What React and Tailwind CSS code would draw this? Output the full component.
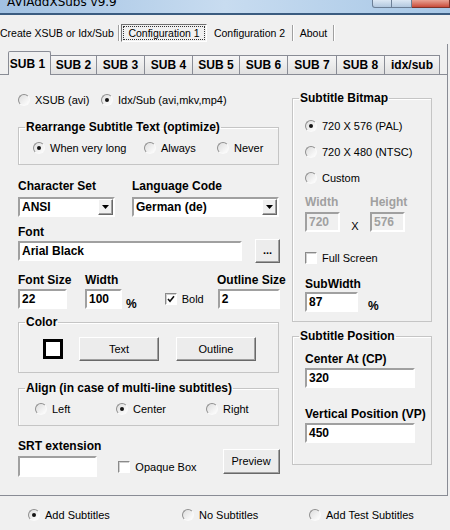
import React from 'react';

const subTabs = [
  { label: 'SUB 1', w: 'w-[43px]', active: true },
  { label: 'SUB 2', w: 'w-[46px]' },
  { label: 'SUB 3', w: 'w-[48px]' },
  { label: 'SUB 4', w: 'w-[48px]' },
  { label: 'SUB 5', w: 'w-[47px]' },
  { label: 'SUB 6', w: 'w-[48px]' },
  { label: 'SUB 7', w: 'w-[49px]' },
  { label: 'SUB 8', w: 'w-[48px]' },
  { label: 'idx/sub', w: 'w-[55px]' },
];

function Radio({ checked }) {
  return (
    <span className="w-[12px] h-[12px] shrink-0 rounded-full border border-t-[#8f8f8f] border-l-[#8f8f8f] border-b-[#fafafa] border-r-[#fafafa] bg-gradient-to-br from-[#dedede] to-white flex items-center justify-center">
      {checked && <span className="w-[4px] h-[4px] rounded-full bg-[#141414]" />}
    </span>
  );
}

function Opt({ checked, label, className = '' }) {
  return (
    <div className={`flex items-center gap-[5px] h-[14px] shrink-0 ${className}`}>
      <Radio checked={checked} />
      <span className="text-[11px] leading-[14px] whitespace-nowrap">{label}</span>
    </div>
  );
}

function Check({ checked, label, className = '' }) {
  return (
    <div className={`flex items-center gap-[5px] h-[14px] shrink-0 ${className}`}>
      <span className="w-[12px] h-[12px] shrink-0 border border-t-[#8a8a8a] border-l-[#8a8a8a] border-b-[#ffffff] border-r-[#ffffff] bg-white shadow-[inset_1px_1px_0_#d0d0d0] flex items-center justify-center">
        {checked && (
          <svg width="8" height="8" viewBox="0 0 8 8">
            <path d="M1 4 L3 6.2 L7 1.2" stroke="#111" strokeWidth="1.6" fill="none" />
          </svg>
        )}
      </span>
      <span className="text-[11px] leading-[14px] whitespace-nowrap">{label}</span>
    </div>
  );
}

function Field({ value = '', className = '', disabled, children }) {
  return (
    <div
      className={`h-[20px] shrink-0 border-2 border-t-[#a0a0a0] border-l-[#a0a0a0] border-b-[#ffffff] border-r-[#ffffff] flex items-center pl-[2px] font-bold text-[12px] leading-[14px] ${
        disabled ? 'bg-[#f0f0f0] text-[#a0a0a0]' : 'bg-white text-black'
      } ${className}`}
    >
      <span className="flex-1 whitespace-nowrap">{value}</span>
      {children}
    </div>
  );
}

function Arrow() {
  return (
    <span className="w-[15px] h-[16px] shrink-0 border border-t-white border-l-white border-b-[#696969] border-r-[#696969] bg-[#f0f0f0] shadow-[inset_-1px_-1px_0_#a0a0a0] flex items-center justify-center">
      <svg width="7" height="4" viewBox="0 0 7 4">
        <polygon points="0,0 7,0 3.5,4" fill="#000" />
      </svg>
    </span>
  );
}

function Btn({ children, className = '' }) {
  return (
    <div
      className={`shrink-0 border border-t-white border-l-white border-b-[#696969] border-r-[#696969] bg-[#ececec] shadow-[inset_-1px_-1px_0_#a0a0a0] flex items-center justify-center text-[11px] ${className}`}
    >
      {children}
    </div>
  );
}

function Group({ title, className = '', children }) {
  return (
    <fieldset className={`border border-[#c5c5c5] shadow-[inset_1px_1px_0_#ffffff] ${className}`}>
      <legend className="ml-[6px] px-[1px] font-bold text-[12px] leading-[14px]">{title}</legend>
      {children}
    </fieldset>
  );
}

const Label = ({ children, className = '' }) => (
  <span className={`font-bold text-[12px] leading-[14px] h-[14px] whitespace-nowrap shrink-0 ${className}`}>{children}</span>
);

export default function App() {
  return (
    <div className="w-[450px] h-[530px] overflow-hidden bg-[#f0f0f0] text-black font-['Liberation_Sans',Arial,sans-serif]">
      {/* title bar, cut off at the top */}
      <div className="h-[13px] overflow-hidden flex bg-gradient-to-r from-[#a1c1e2] via-[#c8dcf0] to-[#a7c7e6]">
        <div className="ml-[7px] -mt-[4px] text-[12px] leading-[12px] whitespace-nowrap font-['DejaVu_Sans',sans-serif]">
          AVIAddXSubs v9.9
        </div>
        <div className="ml-auto flex h-[8px]">
          <div className="w-[20px] border border-t-0 border-[#6c7f96] rounded-bl-[3px] bg-gradient-to-b from-[#dce8f4] to-[#b3c8df]" />
          <div className="w-[20px] border border-t-0 border-l-0 border-[#6c7f96] bg-gradient-to-b from-[#dce8f4] to-[#b3c8df]" />
          <div className="w-[38px] border border-t-0 border-l-0 border-[#7d3128] bg-gradient-to-b from-[#e8a294] to-[#c84a3a]" />
        </div>
      </div>
      <div className="h-[2px] bg-[#3b5c80]" />

      {/* main flat tabs */}
      <div className="h-[29px] flex items-start pt-[9px] text-[10.5px] leading-[14px]">
        <div className="w-[118px] h-[18px] flex items-center whitespace-nowrap">Create XSUB or Idx/Sub</div>
        <div className="w-[2px] h-[16px] mt-[1px] border-l border-r border-l-[#a0a0a0] border-r-white" />
        <div className="ml-[1px] w-[86px] h-[18px] border border-t-[#707070] border-l-[#707070] border-b-white border-r-white p-[1px]">
          <div className="h-full border border-dotted border-[#333] flex items-center justify-center whitespace-nowrap">
            Configuration 1
          </div>
        </div>
        <div className="w-[85px] h-[18px] flex items-center justify-center whitespace-nowrap">Configuration 2</div>
        <div className="w-[2px] h-[16px] mt-[1px] border-l border-r border-l-[#a0a0a0] border-r-white" />
        <div className="w-[39px] h-[18px] flex items-center justify-center">About</div>
        <div className="w-[2px] h-[16px] mt-[1px] border-l border-r border-l-[#a0a0a0] border-r-white" />
      </div>

      {/* SUB tabs */}
      <div className="h-[31px] w-[448px] flex items-end">
        <div className="w-[8px] self-stretch border-b border-[#898c95]" />
        {subTabs.map((t) =>
          t.active ? (
            <div
              key={t.label}
              className={`${t.w} h-[24px] border-t border-l border-r border-[#898c95] rounded-t-[2px] bg-[#f0f0f0] flex items-center justify-center pr-[4px] font-bold text-[12px] whitespace-nowrap`}
            >
              {t.label}
            </div>
          ) : (
            <div
              key={t.label}
              className={`${t.w} h-[20px] border-t border-r border-b border-[#898c95] bg-gradient-to-b from-[#f6f6f6] to-[#e1e1e1] flex items-center justify-center font-bold text-[12px] whitespace-nowrap`}
            >
              {t.label}
            </div>
          )
        )}
        <div className="flex-1 self-stretch border-b border-r border-[#898c95]" />
      </div>

      {/* panel */}
      <div className="w-[448px] h-[421px] border-r border-b border-[#898c95] flex">
        {/* left column */}
        <div className="w-[292px] pl-[18px] flex flex-col">
          <div className="mt-[18px] flex">
            <Opt label="XSUB (avi)" className="w-[83px]" />
            <Opt label="Idx/Sub (avi,mkv,mp4)" checked />
          </div>

          <Group title="Rearrange Subtitle Text (optimize)" className="mt-[13px] w-[261px] pb-[9px]">
            <div className="mt-[7px] flex pl-[14px]">
              <Opt label="When very long" checked className="w-[111px]" />
              <Opt label="Always" className="w-[73px]" />
              <Opt label="Never" />
            </div>
          </Group>

          <div className="mt-[14px] flex">
            <Label className="w-[114px]">Character Set</Label>
            <Label>Language Code</Label>
          </div>
          <div className="mt-[4px] flex">
            <Field value="ANSI" className="w-[97px]">
              <Arrow />
            </Field>
            <Field value="German (de)" className="ml-[17px] w-[147px]">
              <Arrow />
            </Field>
          </div>

          <Label className="mt-[8px] h-[13px]">Font</Label>
          <div className="h-[24px] flex items-center">
            <Field value="Arial Black" className="w-[224px]" />
            <Btn className="ml-[13px] w-[25px] h-[24px] font-bold leading-none pb-[2px]">...</Btn>
          </div>

          <div className="mt-[10px] flex">
            <Label className="w-[67px]">Font Size</Label>
            <Label className="w-[132px]">Width</Label>
            <Label>Outline Size</Label>
          </div>
          <div className="mt-[2px] flex items-center">
            <Field value="22" className="w-[49px]" />
            <Field value="100" className="ml-[18px] w-[37px]" />
            <span className="ml-[4px] self-end -mb-[2px] font-bold text-[12px] leading-[14px]">%</span>
            <Check checked label="Bold" className="ml-[28px]" />
            <Field value="2" className="ml-[14px] w-[62px]" />
          </div>

          <Group title="Color" className="mt-[6px] w-[261px] pb-[11px]">
            <div className="mt-[8px] h-[24px] flex items-center">
              <div className="ml-[24px] w-[20px] h-[20px] border-[3px] border-black bg-white" />
              <Btn className="ml-[16px] w-[80px] h-[24px]">Text</Btn>
              <Btn className="ml-[17px] w-[80px] h-[24px]">Outline</Btn>
            </div>
          </Group>

          <Group title="Align (in case of multi-line subtitles)" className="mt-[8px] w-[261px] pb-[9px]">
            <div className="mt-[7px] flex pl-[16px]">
              <Opt label="Left" className="w-[81px]" />
              <Opt label="Center" checked className="w-[90px]" />
              <Opt label="Right" />
            </div>
          </Group>

          <div className="mt-[13px] flex items-start">
            <div className="flex flex-col">
              <Label>SRT extension</Label>
              <Field className="mt-[3px] w-[79px] h-[21px]" />
            </div>
            <Check label="Opaque Box" className="ml-[17px] mt-[21px]" />
            <Btn className="ml-[26px] mt-[10px] w-[57px] h-[25px]">Preview</Btn>
          </div>
        </div>

        {/* right column */}
        <div className="w-[140px] flex flex-col">
          <Group title="Subtitle Bitmap" className="mt-[16px] w-[140px] pb-[9px]">
            <div className="pl-[12px] flex flex-col">
              <Opt label="720 X 576 (PAL)" checked className="mt-[14px]" />
              <Opt label="720 X 480 (NTSC)" className="mt-[12px]" />
              <Opt label="Custom" className="mt-[12px]" />
              <div className="mt-[10px] flex text-[#a0a0a0]">
                <Label className="w-[65px]">Width</Label>
                <Label>Height</Label>
              </div>
              <div className="mt-[3px] flex items-end">
                <Field value="720" disabled className="w-[35px] h-[19px]" />
                <span className="w-[30px] text-center text-[11px] leading-[14px] -mb-[1px]">X</span>
                <Field value="576" disabled className="w-[35px] h-[19px]" />
              </div>
              <Check label="Full Screen" className="mt-[19px]" />
              <Label className="mt-[12px]">SubWidth</Label>
              <div className="mt-[1px] flex items-end">
                <Field value="87" className="w-[53px]" />
                <span className="ml-[10px] -mb-[1px] font-bold text-[12px] leading-[14px]">%</span>
              </div>
            </div>
          </Group>

          <Group title="Subtitle Position" className="mt-[7px] w-[140px] pb-[21px]">
            <div className="pl-[12px] flex flex-col">
              <Label className="mt-[9px]">Center At (CP)</Label>
              <Field value="320" className="mt-[2px] w-[110px]" />
              <Label className="mt-[19px]">Vertical Position (VP)</Label>
              <Field value="450" className="mt-[2px] w-[110px]" />
            </div>
          </Group>
        </div>
      </div>

      {/* bottom radios */}
      <div className="mt-[12px] flex pl-[28px]">
        <Opt label="Add Subtitles" checked className="w-[154px]" />
        <Opt label="No Subtitles" className="w-[127px]" />
        <Opt label="Add Test Subtitles" />
      </div>
    </div>
  );
}
